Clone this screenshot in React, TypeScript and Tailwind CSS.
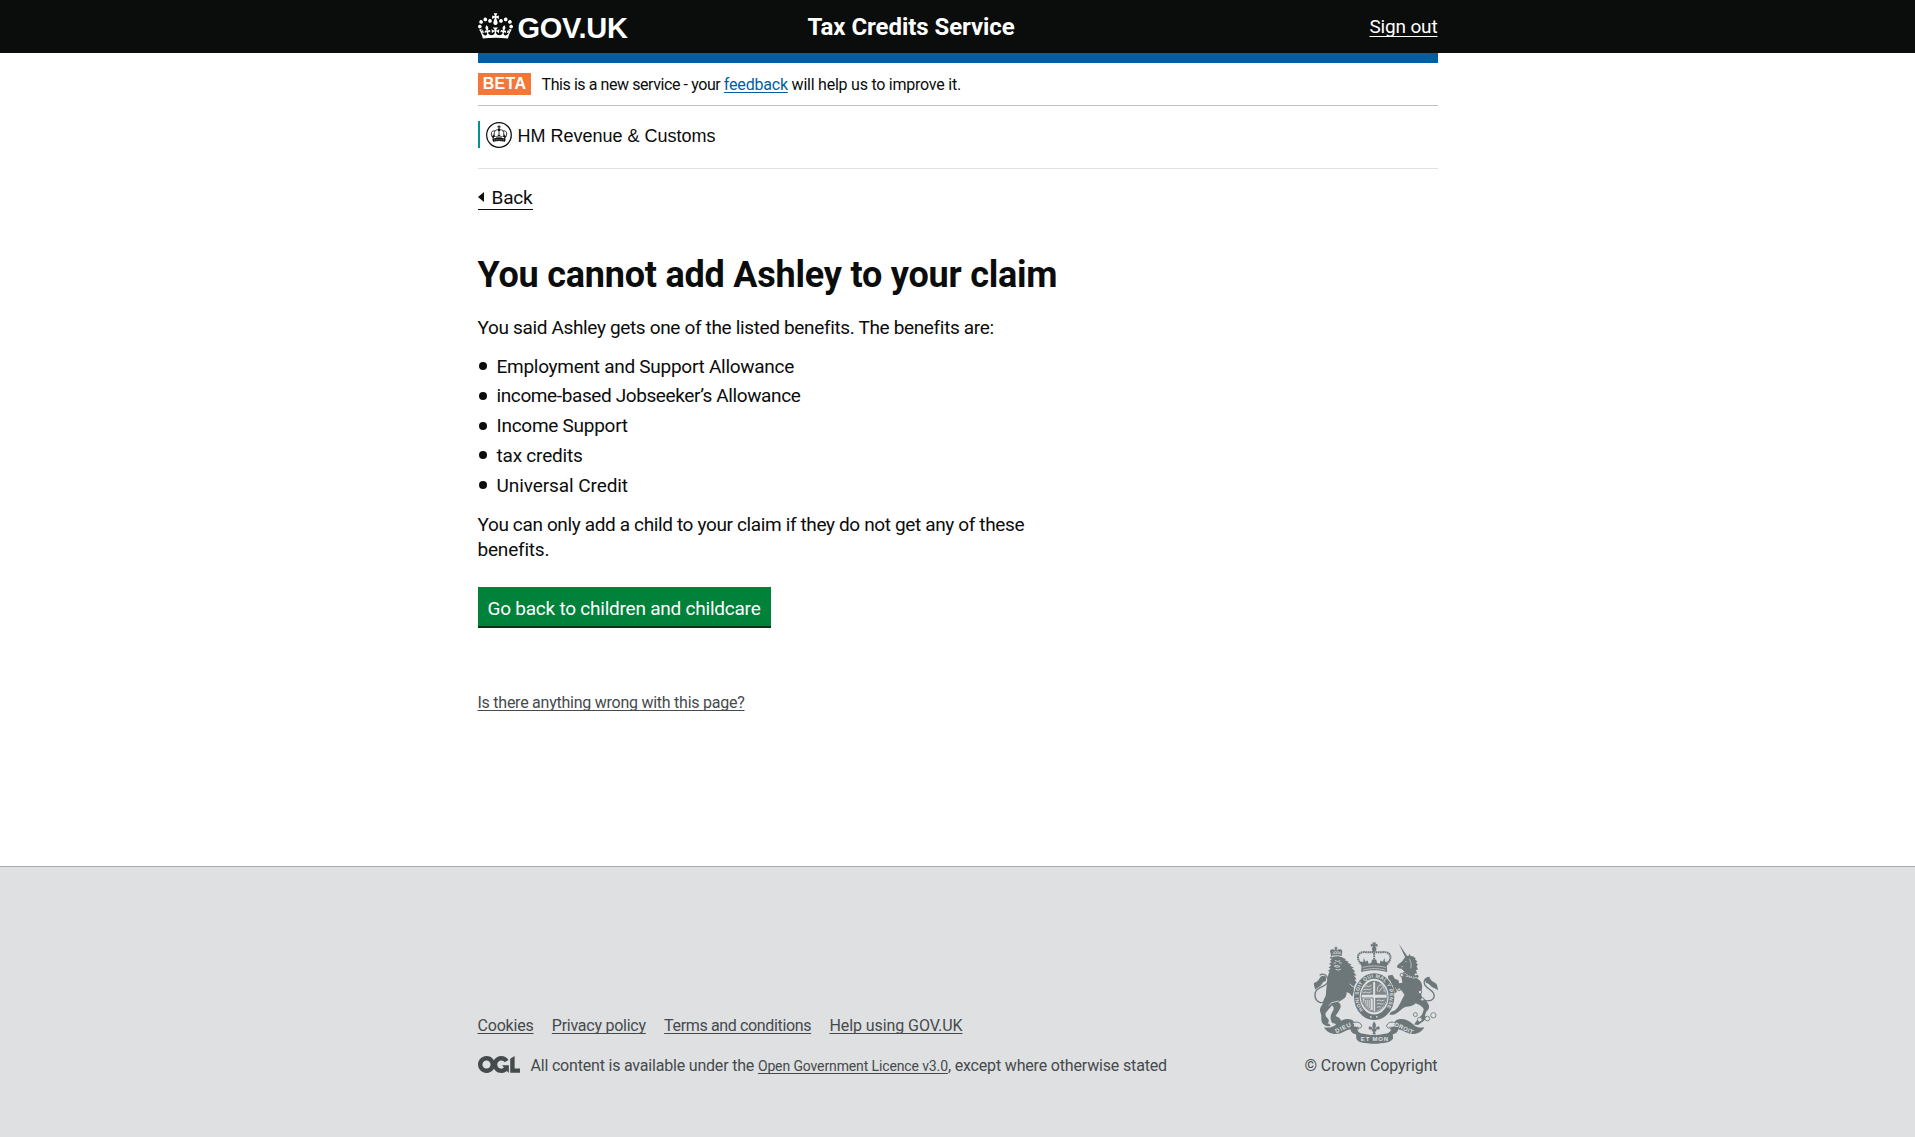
import type { ReactNode } from 'react';

function GovCrown() {
  return (
    <svg viewBox="0 0 132 97" className="h-[26px] w-[35px] shrink-0" fill="currentColor" aria-hidden="true">
      <path fillRule="evenodd" d="M25 30.2c3.5 1.5 7.7-.2 9.1-3.7 1.5-3.6-.2-7.8-3.9-9.2-3.6-1.4-7.6.3-9.1 3.9-1.4 3.5.3 7.5 3.9 9zM9 39.5c3.6 1.5 7.8-.2 9.2-3.7 1.5-3.6-.2-7.8-3.9-9.1-3.6-1.5-7.6.2-9.1 3.8-1.4 3.5.3 7.5 3.8 9zM4.4 57.2c3.5 1.5 7.7-.2 9.1-3.8 1.5-3.6-.2-7.7-3.9-9.1-3.5-1.5-7.6.3-9.1 3.8-1.4 3.5.3 7.6 3.9 9.1zm38.3-21.4c3.5 1.5 7.7-.2 9.1-3.8 1.5-3.6-.2-7.7-3.9-9.1-3.6-1.5-7.6.3-9.1 3.8-1.3 3.6.4 7.7 3.9 9.1zm64.4-5.6c-3.6 1.5-7.8-.2-9.1-3.7-1.5-3.6.2-7.8 3.8-9.2 3.6-1.4 7.7.3 9.2 3.9 1.3 3.5-.4 7.5-3.9 9zm15.9 9.3c-3.6 1.5-7.7-.2-9.1-3.7-1.5-3.6.2-7.8 3.7-9.1 3.6-1.5 7.7.2 9.2 3.8 1.5 3.5-.3 7.5-3.8 9zm4.7 17.7c-3.6 1.5-7.8-.2-9.2-3.8-1.5-3.6.2-7.7 3.9-9.1 3.6-1.5 7.7.3 9.2 3.8 1.3 3.5-.4 7.6-3.9 9.1zM89.3 35.8c-3.6 1.5-7.8-.2-9.2-3.8-1.4-3.6.2-7.7 3.9-9.1 3.6-1.5 7.7.3 9.2 3.8 1.4 3.6-.3 7.7-3.9 9.1zM69.7 17.7l8.9 4.7V9.3l-8.9 2.8c-.2-.3-.5-.6-.9-.9L72.4 0H59.6l3.5 11.2c-.3.3-.6.5-.9.9l-8.8-2.8v13.1l8.8-4.7c.3.3.6.7.9.9l-5 15.4v.1c-.2.8-.4 1.6-.4 2.4 0 4.1 3.1 7.5 7 8.1h.2c.3 0 .7.1 1 .1.4 0 .7 0 1-.1h.2c4-.6 7.1-4.1 7.1-8.1 0-.8-.1-1.7-.4-2.4V34l-5.1-15.4c.4-.2.7-.6 1-.9zM66 92.8c16.9 0 32.8 1.1 47.1 3.2 4-16.9 8.9-26.7 14-33.5l-9.6-3.4c1 4.9 1.1 7.2 0 10.2-1.5-1.4-3-4.3-4.2-8.7L108.6 76c2.8-2 5-3.2 7.5-3.3-4.4 9.4-10 11.9-13.6 11.2-4.3-.8-6.3-4.6-5.6-7.9 1-4.7 5.7-5.9 8-.5 4.3-8.7-3-11.4-7.6-8.8 7.1-7.2 7.9-13.5 2.1-21.1-8 6.1-8.1 12.3-4.5 20.8-4.7-5.4-12.1-2.5-9.5 6.2 3.4-5.2 7.9-2 7.2 3.1-.6 4.3-6.4 7.8-13.5 7.2-10.3-.9-10.9-8-11.2-13.8 2.5-.5 7.1 1.8 11 7.3L80.2 60c-4.1 4.4-8 5.3-12.3 5.4 1.4-4.4 8-11.6 8-11.6H55.5s6.4 7.2 7.9 11.6c-4.2-.1-8-1-12.3-5.4l1.4 16.4c3.9-5.5 8.5-7.7 10.9-7.3-.3 5.8-.9 12.8-11.1 13.8-7.2.6-12.9-2.9-13.5-7.2-.7-5 3.8-8.3 7.1-3.1 2.7-8.7-4.6-11.6-9.4-6.2 3.7-8.5 3.6-14.7-4.6-20.8-5.8 7.6-5 13.9 2.2 21.1-4.7-2.6-11.9.1-7.7 8.8 2.3-5.5 7.1-4.2 8.1.5.7 3.3-1.3 7.1-5.7 7.9-3.5.7-9-1.8-13.5-11.2 2.5.1 4.7 1.3 7.5 3.3l-4.7-15.4c-1.2 4.4-2.7 7.2-4.3 8.7-1.1-3-.9-5.3 0-10.2l-9.5 3.4c5 6.9 9.9 16.7 14 33.5 14.8-2.1 30.8-3.2 47.7-3.2z" />
    </svg>
  );
}

function HmrcCrest() {
  return (
    <svg viewBox="0 0 78 78" className="size-[26px] shrink-0" fill="none" stroke="#0b0c0c" aria-hidden="true">
      <circle cx="39" cy="39" r="37" strokeWidth="3.6" />
      <path d="M39 10v12M34 14.500h10" strokeWidth="3" />
      <circle cx="39" cy="23" r="3.500" fill="#0b0c0c" stroke="none" />
      <path d="M39 26c-5-4-10-3-12 1-7-2-12 3-11 9 0 6 3 9 5 13M39 26c5-4 10-3 12 1 7-2 12 3 11 9 0 6-3 9-5 13M39 26v16M27 27c-4 6-3 12 1 18M51 27c4 6 3 12-1 18" strokeWidth="2.500" />
      <path d="M35 40h8M22 38v12M18 43h9M56 38v12M51 43h9M30 45h18" strokeWidth="3" />
      <path d="M19 50c13-4 27-4 40 0l-2 9c-12-3-24-3-36 0z" fill="#0b0c0c" stroke="none" />
      <path d="M24 53.500h30" stroke="#fff" strokeWidth="1.500" strokeDasharray="4 2.500" />
    </svg>
  );
}

function OglLogo() {
  return (
    <svg viewBox="0 0 483.2 195.7" className="h-[17px] w-[42px] shrink-0" fill="currentColor" aria-label="OGL">
      <path d="M421.5 142.8V.1l-50.7 32.3v161.1h112.4v-50.7zm-122.3-9.6A47.12 47.12 0 0 1 221 97.8c0-26 21.1-47.1 47.1-47.1 16.7 0 31.4 8.7 39.7 21.8l42.7-27.2A97.63 97.63 0 0 0 268.1 0c-36.5 0-68.3 20.1-85.1 49.7A98 98 0 0 0 97.8 0C43.9 0 0 43.9 0 97.8s43.9 97.800 97.8 97.800c36.500 0 68.3-20.1 85.1-49.700a97.760 97.760 0 0 0 149.6 25.400l19.400 22.200h3v-87.800h-80l24.300 27.500zM97.8 145c-26 0-47.100-21.100-47.100-47.100s21.100-47.100 47.100-47.100 47.100 21.100 47.100 47.100S123.800 145 97.800 145" />
    </svg>
  );
}

function RoyalArms({ className }: { className: string }) {
  const ink = '#6d777a';
  const paper = '#dee0e2';
  return (
    <svg viewBox="14 18 376 306" className={className} fill={ink} fontFamily="Liberation Sans, sans-serif" fontWeight="bold" aria-hidden="true">
      {/* lion: crown, head and mane, body, tail */}
      <path d="M69 60l-4-16c4-6 11-6 15-1l1-5h-3v-3h3v-3h4v3h3v3h-3l1 5c6-5 13-4 16 1l-1 16c-10-3-22-3-32 0z" />
      <path d="M72 54c9-3 19-3 28 0M73 46l5 4 4-5 3 5 4-5 3 5 6-3" fill="none" stroke={paper} strokeWidth="2" />
      <path d="M70 64c11-5 24-5 34 1l8 4-1 4 10 3-3 4 12 5-5 3 12 7-6 2 11 9-7 1 10 11-8 0 8 12-6 1 6 8c-7 8-9 18-8 28l-5 15c-5-8-10-12-17-14 1 9-3 17-11 22l-14 9c7 5 9 9 6 17-4 10-9 16-14 24 8 3 16 8 16 17l8 9c-2 4-8 5-12 2l-6 1-9-6c-6 0-10-4-11-10-3-9 0-18 5-26 5-8 4-14-2-19-7 9-13 16-19 23-2 8 2 13 8 18 3 7 1 11-3 13 6 1 8 4 10 8-10 3-19-1-24-7-5-7-4-17-4-25-2-8-6-15-3-21 1-7 6-9 8-16 1-12 9-18 9-27 1-12 1-22 4-33 3-13 0-23 7-35l-5-1 8-8-6-2 8-8-7-3 8-6-5-4 6-5-7-3 6-6c-4-3-3-10 3-14z" />
      <path d="M80 73l7 3 9-2M76 81h7M92 80l8 1M78 90l8-2 9 3-8 3zM82 100l8 2 8-3M62 209l8-9 22-5M125 143c4 6 8 9 14 10" fill="none" stroke={paper} strokeWidth="2.500" />
      <path d="M54 196c-15 9-31 2-34-15-2-15 9-25 23-30 14-5 20-16 13-29-5-8-14-9-22-5" fill="none" stroke={ink} strokeWidth="4" />
      <path d="M53 122c-7-6-16-3-20 6-4 8-9 9-16 13-1 8 2 13 4 20 6-6 13-8 18-14 4-5 4-10 14-12z" />

      {/* unicorn: horn, head and mane, collar, body, tail */}
      <path d="M272 23l27 39-6 5z" />
      <path d="M288 67c4-5 8-7 14-8l1-6 5 7 8 1 7 6-2 3 7 6-4 3 6 8-5 3 5 10-6 2 3 11-6-1-4 10-6-6-10-2-14-9-7-7-6-1-7-3c-1-6 2-8 6-11 5-4 11-8 15-16z" />
      <path d="M291 77h4M280 92l5-1M304 69c6 9 6 19 4 28" fill="none" stroke={paper} strokeWidth="2" />
      <path d="M285 109l7-5 9 7 10 2 10 5 8-2 3 5-6 8-10-2-10-4-11-4-8 2z" />
      <path d="M290 111c10 9 22 14 36 13" fill="none" stroke={paper} strokeWidth="3" strokeDasharray="4 3" />
      <path d="M286 118c12 3 25 9 44 11 9 6 13 15 12 26-1 14-6 22 3 31 9 8 15 14 18 23 1 8-2 13-8 18l-4 11c4 7 2 12-4 17l-17 12-12-1 9-13 15-17c3-9 6-13 4-19-5-7-14-11-23-15-9 8-18 10-29 10-10 2-18 13-29 20-6 4-14 6-21 4 2-8 7-10 13-11 11-6 14-13 19-23 5-11 9-18 13-26l-9-13c-9 1-16-1-19-9-5-3-7-7-7-13l-13-11-2-11 14-3 7 12 11 5 2 9 10-2c-1-10-3-19-6-28z" />
      <path d="M257 134c-3-9-10-12-11-5l3 12 6 10-7 7 2 10 10 5 7-7-6-10z" />
      <path d="M346 191c18 9 35 0 32-15-3-16-26-18-29-33-3-10 5-19 16-19" fill="none" stroke={ink} strokeWidth="4" />
      <path d="M350 132c3-8 12-10 17-3 5 8 12 10 18 14 4 8 4 13 5 20-8-6-16-7-21-12-4-5-7-8-14-10z" />
      <g fill={paper} stroke={ink} strokeWidth="2.500">
        <circle cx="336" cy="168" r="5" />
        <circle cx="343" cy="190" r="5" />
        <circle cx="322" cy="236" r="6" />
        <circle cx="335" cy="251" r="7" />
        <circle cx="358" cy="248" r="7" />
        <circle cx="376" cy="238" r="8" />
        <circle cx="281" cy="117" r="5" />
        <circle cx="273" cy="160" r="4" />
      </g>

      {/* imperial crown */}
      <circle cx="198" cy="39" r="7" />
      <path d="M192 19h12l-3 6 7-2v9l-7-2 2 5h-10l2-5-7 2v-9l7 2z" />
      <path d="M163 88c-20-18-18-39 4-40 12 0 23 2 31-2 8 4 19 2 31 2 22 1 24 22 4 40" fill="none" stroke={ink} strokeWidth="6" strokeDasharray="5 1.500" />
      <path d="M198 44v38" fill="none" stroke={ink} strokeWidth="6" strokeDasharray="5 2" />
      <path d="M160 90l-3-14 8 2 2-12 5 11 7-4 2 10 8-2 3-11h12l3 11 8 2 2-10 7 4 5-11 2 12 8-2-3 14 1 18c-25-7-52-7-78 0z" />
      <path d="M163 94c23-6 47-6 70 0M164 102c23-6 45-6 68 0" fill="none" stroke={paper} strokeWidth="2" />

      {/* garter and shield */}
      <ellipse cx="198" cy="182" rx="62" ry="73" fill={paper} />
      <ellipse cx="198" cy="182" rx="52" ry="62" fill="none" stroke={ink} strokeWidth="17" />
      <path id="garter" d="M165 222A47 57 0 1 1 231 222" fill="none" />
      <text fontSize="15" fill={paper} textLength="242">
        <textPath href="#garter">HONI SOIT QUI MAL Y PENSE</textPath>
      </text>
      <circle cx="188" cy="243" r="2.500" fill={paper} />
      <circle cx="206" cy="243" r="2.500" fill={paper} />
      <ellipse cx="198" cy="182" rx="39" ry="46" fill="none" stroke={ink} strokeWidth="2.500" />
      <path d="M166 158c7-13 16-21 29-24v42h-34zM201 134c13 3 22 11 29 24l4 18h-33zM201 185h34c-1 19-15 36-34 41z" opacity="0.85" />
      <path d="M161 186h34v40c-18-5-31-20-34-40z" fill="none" stroke={ink} strokeWidth="2.500" />
      <path d="M169 190c-3 12 3 22 17 28V190zM174 191v16M180 191v22" fill="none" stroke={ink} strokeWidth="2.500" />
      <path d="M168 152l7-3 6 3 9-4M166 161l9-2 6 3 9-4M165 170l9-2 6 3 10-4M206 194l8-2 5 3 10-3M206 204l8-2 5 3 7-3M206 214l7-2 5 2M208 166c-2-14 5-20 12-20 6 5 9 12 8 21M212 168l11-15" fill="none" stroke={paper} strokeWidth="2.500" />

      {/* motto ribbon */}
      <path d="M47 274c15 3 27 0 38-10 15-13 31-18 47-12 7 4 8 12 5 20 6-1 12 2 15 6l-7 18c-9-3-17-5-18-16-13 2-22 9-33 13-20 5-39-4-47-19z" />
      <path d="M349 274c-15 3-25 0-35-10-15-13-33-18-49-12-7 4-8 12-5 20-6-1-12 2-15 6l7 18c9-3 17-5 18-16 13 2 22 9 33 13 20 5 38-4 46-19z" />
      <path d="M133 263c8-8 23-5 27 5 2 9-9 11-12 4M263 263c-8-8-23-5-27 5-2 9 9 11 12 4" fill={paper} stroke={ink} strokeWidth="3" />
      <path d="M143 276c3 8 9 13 17 16 25 7 51 7 76 0 8-3 13-8 16-16l3 31c-3 7-9 10-17 12-28 6-52 6-80 0-7-2-12-5-14-12z" />
      <path d="M148 281c3 6 8 9 14 11M248 281c-3 6-8 9-14 11" fill="none" stroke={paper} strokeWidth="3" />
      <g fill={paper} fontSize="18">
        <text x="84" y="292" transform="rotate(-25 84 292)" textLength="50">DIEU</text>
        <text x="158" y="315" textLength="82">ET MON</text>
        <text x="258" y="270" transform="rotate(25 258 270)" textLength="60">DROIT</text>
      </g>
      {/* fleur-de-lis */}
      <path d="M198 256c8 10 6 16 3 23 4-10 14-10 14-3 0 6-6 7-9 4 0 5-2 7-5 8l3 8h-12l3-8c-3-1-5-3-5-8-3 3-9 2-9-4 0-7 10-7 14 3-3-7-5-13 3-23z" stroke={paper} strokeWidth="1" />
    </svg>
  );
}

function Link({ className, children }: { className: string; children: ReactNode }) {
  return (
    <a href="#" className={`underline decoration-1 [text-decoration-skip-ink:none] ${className}`}>
      {children}
    </a>
  );
}

export default function App() {
  return (
    <div className="flex min-h-[1137px] flex-col bg-white font-['Roboto',sans-serif] text-[19px] leading-[25px] text-[#0b0c0c]">
      <header className="h-[53px] bg-[#0b0c0c] text-white">
        <div className="mx-auto grid h-full w-[960px] grid-cols-[330px_1fr_auto]">
          <a href="#" className="flex items-start gap-[5px] pt-[12.500px]">
            <GovCrown />
            <span className="pt-px font-['Liberation_Sans',sans-serif] text-[29px] leading-[29px] font-bold tracking-[-0.25px]">GOV.UK</span>
          </a>
          <span className="pt-[12px] text-[24px] leading-[30px] font-bold tracking-[-0.06px]">Tax Credits Service</span>
          <span className="pt-[14px]">
            <Link className="tracking-[-0.16px] underline-offset-[3px]">Sign out</Link>
          </span>
        </div>
      </header>

      <div className="mx-auto w-[960px]">
        <div className="h-[10px] bg-[#005ea5]" />
        <div className="flex h-[43px] items-start border-b border-[#bfc1c3] pt-[10px] text-[16px] leading-5">
          <strong className="mr-[11px] flex h-[22px] w-[53px] items-center justify-center bg-[#f47738] pl-px font-['Liberation_Sans',sans-serif] text-[16px] font-bold tracking-[0.3px] text-white">BETA</strong>
          <p className="pt-[1.500px] whitespace-pre">
            <span className="tracking-[-0.42px]">This is a new service - your </span>
            <Link className="tracking-[-0.192px] text-[#005ea5] underline-offset-2">feedback</Link>
            <span className="tracking-[-0.236px]"> will help us to improve it.</span>
          </p>
        </div>
        <div className="flex h-[63px] items-start border-b border-[#dee0e2] pt-[15px]">
          <div className="flex h-[27px] items-center border-l-2 border-[#009390] pl-[6px]">
            <HmrcCrest />
            <span className="ml-[6px] pt-[2px] font-['Liberation_Sans',sans-serif] text-[18px] leading-6">HM Revenue &amp; Customs</span>
          </div>
        </div>
        <div className="flex pt-[16px]">
          <a href="#" className="flex h-[25px] items-start border-b border-[#0b0c0c]">
            <svg viewBox="0 0 6 10" className="mt-[7px] mr-[8px] h-[10px] w-[6px]" fill="currentColor" aria-hidden="true">
              <path d="M0 5l6-5v10z" />
            </svg>
            <span className="tracking-[-0.19px]">Back</span>
          </a>
        </div>

        <main className="flex w-[640px] flex-col items-start">
          <h1 className="mt-[44.500px] text-[36px] leading-[40px] font-bold tracking-[-0.22px]">You cannot add Ashley to your claim</h1>
          <p className="mt-5 tracking-[-0.345px]">You said Ashley gets one of the listed benefits. The benefits are:</p>
          <ul className="mt-[14px] flex flex-col gap-[4.750px]">
            {[
              ['Employment and Support Allowance', 'tracking-[-0.27px]'],
              ['income-based Jobseeker’s Allowance', 'tracking-[-0.39px]'],
              ['Income Support', 'tracking-[-0.26px]'],
              ['tax credits', 'tracking-[-0.212px]'],
              ['Universal Credit', 'tracking-[-0.08px]'],
            ].map(([label, tracking]) => (
              <li key={label} className="flex items-center">
                <span className="mr-[10px] ml-[1px] size-2 rounded-full bg-[#0b0c0c]" />
                <span className={tracking}>{label}</span>
              </li>
            ))}
          </ul>
          <p className="mt-[14px] w-[600px]">
            <span className="tracking-[-0.365px]">You can only add a child to your claim if they do not get any of these</span>
            <br />
            <span className="tracking-[-0.2px]">benefits.</span>
          </p>
          <button className="mt-[25px] h-[39px] w-[293px] bg-[#00823b] pt-[5px] tracking-[-0.228px] text-white shadow-[0_2px_0_#003618]">Go back to children and childcare</button>
          <p className="mt-[67px] text-[16px] leading-5 text-[#454a4d]">
            <Link className="tracking-[-0.248px] underline-offset-2">Is there anything wrong with this page?</Link>
          </p>
        </main>
      </div>

      <footer className="mt-auto h-[271px] border-t border-[#a1acb2] bg-[#dee0e2] text-[16px] leading-5 text-[#454a4c]">
        <div className="mx-auto flex w-[960px] justify-between pt-[75px]">
          <div className="pt-[73.500px]">
            <ul className="flex gap-[18.300px]">
              <li><Link className="tracking-[-0.201px] underline-offset-2">Cookies</Link></li>
              <li><Link className="tracking-[-0.249px] underline-offset-2">Privacy policy</Link></li>
              <li><Link className="tracking-[-0.353px] underline-offset-2">Terms and conditions</Link></li>
              <li><Link className="tracking-[-0.076px] underline-offset-2">Help using GOV.UK</Link></li>
            </ul>
            <div className="mt-5 flex items-start gap-[11px]">
              <OglLogo />
              <p className="whitespace-pre">
                <span className="tracking-[-0.195px]">All content is available under the </span>
                <Link className="text-[14px] tracking-[-0.124px] underline-offset-2">Open Government Licence v3.0</Link>
                <span className="tracking-[-0.169px]">, except where otherwise stated</span>
              </p>
            </div>
          </div>
          <div className="flex flex-col items-end">
            <RoyalArms className="h-[102px] w-[125px]" />
            <span className="mt-[11.500px] tracking-[-0.09px]">© Crown Copyright</span>
          </div>
        </div>
      </footer>
    </div>
  );
}
